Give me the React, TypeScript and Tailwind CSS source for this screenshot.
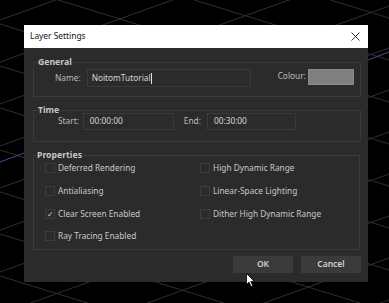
import React from "react";

const font = { fontFamily: '"Noto Sans", "Open Sans", Arial, sans-serif' };

function Grid() {
  const linesA: JSX.Element[] = [];
  const linesB: JSX.Element[] = [];
  for (let i = -10; i < 14; i++) {
    const y0 = i * 42;
    linesA.push(<line key={"a" + i} x1={0} y1={y0 + 20} x2={389} y2={y0 - 120} />);
  }
  for (let i = -10; i < 14; i++) {
    const y0 = i * 42;
    linesB.push(<line key={"b" + i} x1={0} y1={y0 - 60} x2={389} y2={y0 + 60} />);
  }
  return (
    <svg className="absolute inset-0" width={389} height={303} viewBox="0 0 389 303">
      <rect width="389" height="303" fill="#000" />
      <g stroke="#3b3b3b" strokeWidth="0.8">
        {linesA}
        {linesB}
      </g>
      <line x1={0} y1={162} x2={24} y2={153} stroke="#4a4a9a" strokeWidth="1" />
      <line x1={368} y1={60} x2={389} y2={52} stroke="#4a4a9a" strokeWidth="1" />
    </svg>
  );
}

function Check({ label, checked }: { label: string; checked?: boolean }) {
  return (
    <div className="flex items-center h-[22.7px]">
      <div className="w-[10px] h-[10px] border border-[#3c3c3c] flex items-center justify-center text-[8px] leading-none text-[#d0d0d0]">
        {checked ? "✓" : ""}
      </div>
      <span className="ml-[3px] text-[8.3px] text-[#c9c9c9]">{label}</span>
    </div>
  );
}

export default function App() {
  return (
    <div className="relative w-[389px] h-[303px] overflow-hidden bg-black" style={font}>
      <Grid />
      <div className="relative ml-[24px] pt-[25px] w-[344px]">
        <div className="bg-white h-[23px] flex items-center justify-between pl-[6px] pr-[8px]">
          <span className="text-[8.4px] text-[#111]">Layer Settings</span>
          <svg width="9" height="9" viewBox="0 0 9 9">
            <path d="M0.5 0.5 L8.5 8.5 M8.5 0.5 L0.5 8.5" stroke="#222" strokeWidth="0.9" />
          </svg>
        </div>
        <div className="bg-[#2b2b2b] h-[234px] pt-[8px] pl-[9px] pr-[7px]">
          <fieldset className="border border-[#3a3a3a] h-[41px]">
            <legend className="ml-[4px] text-[8.7px] font-bold leading-[12px] text-[#c8c8c8]">General</legend>
            <div className="flex items-center mt-[1px]">
              <span className="ml-[21px] text-[8.3px] text-[#bcbcbc]">Name:</span>
              <div className="ml-[6px] w-[164px] h-[18px] border border-[#3a3a3a] flex items-center pl-[4px] text-[8.3px] text-[#d6d6d6]">
                NoitomTutorial<span className="inline-block w-px h-[11px] bg-[#e0e0e0]" />
              </div>
              <span className="ml-[27px] -mt-[4px] text-[8.3px] text-[#bcbcbc]">Colour:</span>
              <div className="ml-[2px] -mt-[2px] w-[46px] h-[16px] bg-[#808080] border border-[#8a8a8a]" />
            </div>
          </fieldset>
          <fieldset className="mt-[7px] border border-[#3a3a3a] h-[38px]">
            <legend className="ml-[4px] text-[8.7px] font-bold leading-[12px] text-[#c8c8c8] -mb-[3px]">Time</legend>
            <div className="flex items-center">
              <span className="ml-[24px] text-[8.3px] text-[#bcbcbc]">Start:</span>
              <div className="ml-[4px] w-[91px] h-[17px] border border-[#3a3a3a] flex items-center pl-[6px] text-[8.3px] text-[#d6d6d6]">
                00:00:00
              </div>
              <span className="ml-[10px] text-[8.3px] text-[#bcbcbc]">End:</span>
              <div className="ml-[6px] w-[89px] h-[17px] border border-[#3a3a3a] flex items-center pl-[6px] text-[8.3px] text-[#d6d6d6]">
                00:30:00
              </div>
            </div>
          </fieldset>
          <fieldset className="mt-[7px] border border-[#3a3a3a] w-[327px] h-[101px]">
            <legend className="ml-[3px] text-[8.7px] font-bold leading-[12px] text-[#c8c8c8] -mb-[4px]">Properties</legend>
            <div className="grid grid-cols-[155px_1fr] pl-[11px]">
              <Check label="Deferred Rendering" />
              <Check label="High Dynamic Range" />
              <Check label="Antialiasing" />
              <Check label="Linear-Space Lighting" />
              <Check label="Clear Screen Enabled" checked />
              <Check label="Dither High Dynamic Range" />
              <Check label="Ray Tracing Enabled" />
            </div>
          </fieldset>
          <div className="flex justify-end gap-[8px] mt-[6px] pr-0">
            <button className="w-[60px] h-[17px] bg-[#3a3a3a] text-[8.5px] font-semibold text-[#d0d0d0]">OK</button>
            <button className="w-[60px] h-[17px] bg-[#3a3a3a] text-[8.5px] font-semibold text-[#d0d0d0]">Cancel</button>
          </div>
        </div>
      </div>
      <svg className="absolute left-[246px] top-[273px]" width="10" height="15" viewBox="0 0 10 15">
        <path d="M0.5 0.5 L0.5 11.5 L3 9 L5 13.5 L6.8 12.7 L4.8 8.4 L8.3 8.4 Z" fill="#fff" stroke="#000" strokeWidth="0.8" />
      </svg>
    </div>
  );
}
